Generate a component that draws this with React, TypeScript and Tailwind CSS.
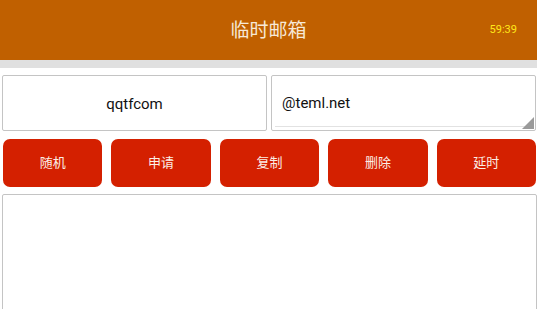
import React from "react";

const font = { fontFamily: '"Roboto", "Noto Sans CJK SC", sans-serif' };

export default function App() {
  const buttons = ["随机", "申请", "复制", "删除", "延时"];
  return (
    <div className="w-[537px] h-[309px] overflow-hidden bg-white" style={font}>
      <div className="relative h-[60px] bg-[#c06000] flex items-center justify-center">
        <span className="text-[19px] text-[#f7e9d6] leading-none">临时邮箱</span>
        <span className="absolute right-[20px] top-[24px] text-[11px] leading-none text-[#ffe81a]">59:39</span>
      </div>
      <div className="h-[8px] bg-[#e0e0e0]" />
      <div className="pt-[7px] pl-[2px] pr-[1px] grid grid-cols-2 gap-[4px]">
        <div className="h-[56px] border border-[#c4c4c4] rounded-[2px] flex items-center justify-center pt-[2px] text-[15px] text-[#111]">
          qqtfcom
        </div>
        <div className="relative h-[56px] border border-[#c4c4c4] rounded-[2px] flex flex-col">
          <div className="flex-1 flex items-center pl-[10px] pt-[4px] text-[15px] text-[#111]">@teml.net</div>
          <div className="mx-[3px] mb-[3px] h-[1px] bg-[#e2e2e2]" />
          <svg className="absolute right-[1px] bottom-[1px]" width="12" height="12" viewBox="0 0 12 12">
            <polygon points="12,0 12,12 0,12" fill="#9a9a9a" />
          </svg>
        </div>
      </div>
      <div className="pt-[8px] pl-[3px] pr-[1px] grid grid-cols-5 gap-[9px]">
        {buttons.map((b) => (
          <div
            key={b}
            className="h-[48px] rounded-[7px] bg-[#d42000] flex items-center justify-center text-[13px] text-[#fbeee6]"
          >
            {b}
          </div>
        ))}
      </div>
      <div className="mt-[7px] ml-[2px] h-[140px] border border-[#c4c4c4] rounded-[2px]" />
    </div>
  );
}
